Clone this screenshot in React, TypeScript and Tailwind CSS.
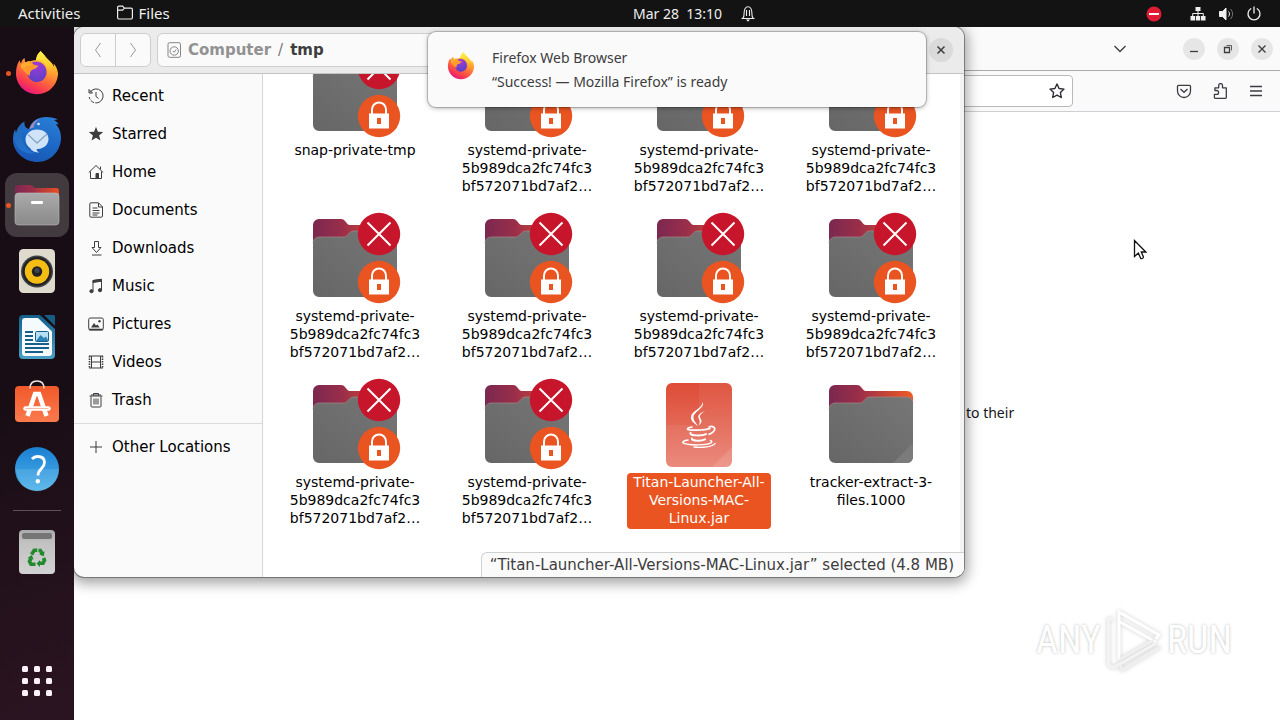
import type { ReactNode } from "react";

const UI = "font-['Noto_Sans',sans-serif]";

/* ---------- Dock artwork ---------- */

function FirefoxLogo({ id, className }: { id: string; className: string }) {
  return (
    <svg viewBox="0 0 48 48" className={className} aria-hidden="true">
      <defs>
        <linearGradient id={`${id}-body`} x1="0.8" y1="0.05" x2="0.3" y2="1">
          <stop offset="0" stopColor="#fff44f" />
          <stop offset="0.25" stopColor="#ffb52e" />
          <stop offset="0.55" stopColor="#ff7139" />
          <stop offset="0.8" stopColor="#fb3a50" />
          <stop offset="1" stopColor="#e31587" />
        </linearGradient>
        <linearGradient id={`${id}-flame`} x1="0.4" y1="0" x2="0.6" y2="1">
          <stop offset="0" stopColor="#fff24a" />
          <stop offset="0.5" stopColor="#ffcb2f" />
          <stop offset="1" stopColor="#ff8a2a" stopOpacity="0" />
        </linearGradient>
        <radialGradient id={`${id}-globe`} cx="0.5" cy="0.2" r="0.9">
          <stop offset="0" stopColor="#a436d8" />
          <stop offset="0.5" stopColor="#7640cf" />
          <stop offset="1" stopColor="#5a3cc0" />
        </radialGradient>
      </defs>
      <path
        d="M45 24c-.6-4-2-7-4.500-9.500.4 1.500.6 2.800.7 4-2.400-5.500-6.800-7.800-9.400-11.700C30.600 5 28.500 3.500 27.800 2c-3 2.300-4.400 5.500-4.800 9-2 .1-4 .6-5.500 1.300-1.800-.6-4 .3-4.600 1.300-1-.9-1.300-2.700-1.200-4.500-2.600 1.400-3.500 4.200-3.600 5.400-1-.7-1.200-2-1-3.500C4.300 14 3 19 3 24.500 3 36 12.500 45.200 24 45.200S45 36 45 24z"
        fill={`url(#${id}-body)`}
      />
      <path
        d="M27.800 2c-3 2.300-4.400 5.500-4.800 9 6.300.5 11.300 4.800 11.800 11 .5 6-2.500 9-4.800 11 8-1 12.500-8 11.200-14.500C38.800 13 34.400 10.700 31.800 6.800 30.600 5 28.500 3.500 27.800 2z"
        fill={`url(#${id}-flame)`}
      />
      <path d="M15.500 16.500c2-3 6-4.500 10-3.500 5 1 8.200 5.500 8 10.500-.2 5.500-4.500 9.500-9.700 9.500-5 0-9-3.800-9-8.800 0-3 0-5.500.7-7.700z" fill={`url(#${id}-globe)`} />
      <path
        d="M8 17c3.500-3.500 8-4.500 11-3.200 1.600 2.200 3.200 2.600 6.200 2.800-1 2.500-3 3.200-5.700 4.200-2.500 1-3 3.500-2.400 6-3.600-1.800-7.600-5-9.100-9.800z"
        fill="#ff9a2c"
      />
      <path d="M8 15c2-1.500 5-2.300 8-2 1.500 1.500 2 2 3.500 2.700-4 .3-8.500 1.300-11 4.300-.6-1.600-.8-3.400-.5-5z" fill="#ffb733" opacity="0.7" />
    </svg>
  );
}

function ThunderbirdLogo() {
  return (
    <svg viewBox="0 0 48 48" className="size-12" aria-hidden="true">
      <defs>
        <linearGradient id="tb-body" x1="0.7" y1="0" x2="0.3" y2="1">
          <stop offset="0" stopColor="#2a7cd4" />
          <stop offset="0.5" stopColor="#1c68c6" />
          <stop offset="1" stopColor="#1a57b4" />
        </linearGradient>
        <linearGradient id="tb-wing" x1="0" y1="0" x2="0" y2="1">
          <stop offset="0" stopColor="#2368b4" />
          <stop offset="1" stopColor="#2273cf" />
        </linearGradient>
      </defs>
      <path
        d="M16 14C18 6 25 2 33 2c5 0 9 1 12 2.500-1.500 0-3 .3-4 .8 2.500 1 4 2.700 4.800 4.400-1-.4-2-.5-2.800-.3 3.300 3.500 5 8 5 13.100C48 36 37.500 47 24.500 47 12 47 1 38 0 26c-.3-4 .4-8 2-11.500.3 1.700.5 3 1 4C4 13 7 9 11.500 6.500c-.500 4 .600 6.500 4.500 7.500z"
        fill="url(#tb-body)"
      />
      <path d="M11.500 6.500C8 12 7.500 18 9.500 25c2 7 6 11 13 13-9 2-18-3-20.500-11.500C.500 21 1.500 18 2 14.500c.3 1.700.5 3 1 4C4 13 7 9 11.500 6.500z" fill="url(#tb-wing)" />
      <path d="M16.500 14c1.500-5 5.500-9 10.500-10.500-4 2.500-6 5.500-6.500 9z" fill="#a58bb8" />
      <circle cx="25.500" cy="9" r="1.300" fill="#d8ecff" />
      <path d="M12.500 24.500c0-5.500 4.500-10 11.500-10s11.500 4 11.500 9.500S31 33.500 25 34c-1 0-1.500.5-1.300 1.200.3 1 1.300 1.800 2.800 2.300-4.500 0-8-1.500-9.500-4.500-2.500-2-4.500-4.500-4.500-8.500z" fill="#cfe4f8" />
      <path d="m15 19.500 9 8.500 10-9" fill="none" stroke="#8ba6c2" strokeWidth="1.300" />
    </svg>
  );
}

function FilesLogo() {
  return (
    <svg viewBox="0 0 48 48" className="size-12" aria-hidden="true">
      <defs>
        <linearGradient id="fl-back" x1="0" y1="0" x2="1" y2="0">
          <stop offset="0" stopColor="#7b2850" />
          <stop offset="0.4" stopColor="#9c2f4a" />
          <stop offset="1" stopColor="#ea5020" />
        </linearGradient>
        <linearGradient id="fl-front" x1="0" y1="0" x2="0" y2="1">
          <stop offset="0" stopColor="#aaa" />
          <stop offset="1" stopColor="#8a8a8a" />
        </linearGradient>
      </defs>
      <path d="M2 16V7a3 3 0 0 1 3-3h13l4 3h21a3 3 0 0 1 3 3v9H2z" fill="url(#fl-back)" />
      <rect x="2" y="12" width="44" height="32" rx="3.500" fill="url(#fl-front)" stroke="#bdbdbd" strokeWidth="0.600" />
      <rect x="18" y="20" width="12" height="3" rx="1" fill="#fff" />
    </svg>
  );
}

function RhythmboxLogo() {
  return (
    <svg viewBox="0 0 48 48" className="size-12" aria-hidden="true">
      <rect x="6" y="2" width="36" height="44" rx="4.500" fill="#dedace" />
      <circle cx="24" cy="24.500" r="16" fill="#3f4246" />
      <circle cx="24" cy="24.500" r="14.500" fill="#222" />
      <circle cx="24" cy="24.500" r="12.200" fill="#f4bd16" />
      <circle cx="24" cy="24.500" r="5.200" fill="#222" />
      <circle cx="24" cy="23.500" r="2.500" fill="#3d4652" />
    </svg>
  );
}

function WriterLogo() {
  return (
    <svg viewBox="0 0 48 48" className="size-12" aria-hidden="true">
      <defs>
        <linearGradient id="wr-bg" x1="0" y1="0" x2="0" y2="1">
          <stop offset="0" stopColor="#14608c" />
          <stop offset="1" stopColor="#4a9fc6" />
        </linearGradient>
      </defs>
      <path d="M10 2h17l15 14v26a4 4 0 0 1-4 4H10a4 4 0 0 1-4-4V6a4 4 0 0 1 4-4z" fill="url(#wr-bg)" />
      <path d="M31 2h9.500A1.500 1.500 0 0 1 42 3.500V13z" fill="#155d85" />
      <path d="M12 5h13l14 13.500V40a3 3 0 0 1-3 3H12a3 3 0 0 1-3-3V8a3 3 0 0 1 3-3z" fill="#f5fafd" />
      <path d="M12 19h8M12 23h8M12 27h8M12 31h24M12 35h24M12 39h18" stroke="#16618c" strokeWidth="2" />
      <rect x="22.500" y="18.500" width="13" height="10" rx="1" fill="#b7e0f5" stroke="#16618c" />
      <path d="m23 28 4.500-6 3.500 3 2-1.500 2.500 4.500z" fill="#2b82b5" />
    </svg>
  );
}

function SoftwareLogo() {
  return (
    <svg viewBox="0 0 48 48" className="size-12" aria-hidden="true">
      <defs>
        <linearGradient id="sw-bg" x1="0" y1="0" x2="0" y2="1">
          <stop offset="0" stopColor="#f0592b" />
          <stop offset="1" stopColor="#fb7a4d" />
        </linearGradient>
      </defs>
      <rect x="2" y="7" width="44" height="36" rx="4" fill="url(#sw-bg)" />
      <path d="M17 9.500c0-5 3-7.500 7-7.500s7 2.500 7 7.500" fill="none" stroke="#f3e6dc" strokeWidth="1.500" />
      <path d="m14.500 37 7.500-22h4l7.500 22" fill="none" stroke="#fff" strokeWidth="4.500" />
      <path d="M12.500 29.500h23" stroke="#fff" strokeWidth="4.500" strokeLinecap="round" />
      <path d="M12.500 29.500h23" stroke="#f5a98c" strokeWidth="0.800" />
    </svg>
  );
}

function HelpLogo() {
  return (
    <svg viewBox="0 0 48 48" className="size-12" aria-hidden="true">
      <defs>
        <linearGradient id="hp-bg" x1="0" y1="0" x2="0" y2="1">
          <stop offset="0" stopColor="#1b7fd2" />
          <stop offset="1" stopColor="#4db2ea" />
        </linearGradient>
      </defs>
      <circle cx="24" cy="24" r="22" fill="url(#hp-bg)" />
      <path d="M2 24h44A22 22 0 0 1 9 40.500z" fill="#fff" opacity="0.100" />
      <path d="M19 14c1.500-1.700 3.500-2.500 5.500-2.500 4.500 0 7 2.300 7 6 0 6-6.500 6-6.500 13" fill="none" stroke="#fff" strokeWidth="2.800" />
      <circle cx="24.800" cy="36.200" r="2.200" fill="#fff" />
    </svg>
  );
}

function TrashLogo() {
  return (
    <svg viewBox="0 0 48 48" className="size-12" aria-hidden="true">
      <defs>
        <linearGradient id="tr-bg" x1="0" y1="0" x2="0" y2="1">
          <stop offset="0" stopColor="#aaa" />
          <stop offset="0.300" stopColor="#c2c2c2" />
          <stop offset="1" stopColor="#d2d2d2" />
        </linearGradient>
      </defs>
      <rect x="6" y="2" width="36" height="44" rx="4" fill="url(#tr-bg)" />
      <rect x="9" y="5" width="30" height="6" rx="2" fill="#757575" />
      <g fill="none" stroke="#228a2c" strokeWidth="3.600">
        <path d="m18.500 26.500 2.800-4.300h3" />
        <path d="m25.500 22.500h1.800l2.200 3.500" />
        <path d="m30.500 30 1 2.200-1.500 3h-3.500" />
        <path d="M22.500 36.200H18l-1.500-2.700 1.300-3" />
      </g>
      <path d="m31.500 23.300-.6 5-4.800-1.800zM27 32v7l-3.500-3.500zM14.500 30l4.200-3 2 4.600z" fill="#228a2c" />
    </svg>
  );
}

const dockApps = [
  { name: "Firefox Web Browser", icon: <FirefoxLogo id="dock-fx" className="size-12" />, running: true, active: false },
  { name: "Thunderbird Mail", icon: <ThunderbirdLogo />, running: false, active: false },
  { name: "Files", icon: <FilesLogo />, running: true, active: true },
  { name: "Rhythmbox", icon: <RhythmboxLogo />, running: false, active: false },
  { name: "LibreOffice Writer", icon: <WriterLogo />, running: false, active: false },
  { name: "Ubuntu Software", icon: <SoftwareLogo />, running: false, active: false },
  { name: "Help", icon: <HelpLogo />, running: false, active: false },
];

function Dock() {
  return (
    <nav aria-label="Dock" className="flex w-[74px] shrink-0 flex-col items-center gap-0.5 bg-linear-160 from-[#180d14] from-50% to-[#2b1421] pt-3.5 pb-[7px]">
      {dockApps.map((app) => (
        <button
          key={app.name}
          aria-label={app.name}
          className={`relative flex size-16 items-center justify-center rounded-xl ${app.active ? "bg-[#433a40]" : ""}`}
        >
          {app.running && <span className="absolute left-px size-[5px] rounded-full bg-[#e95420]" />}
          {app.icon}
        </button>
      ))}
      <hr className="my-[7px] w-12 border-[#5b5157]" />
      <button aria-label="Trash" className="flex size-16 items-center justify-center">
        <TrashLogo />
      </button>
      <button aria-label="Show Applications" className="mt-auto flex size-16 items-center justify-center">
        <svg viewBox="0 0 30 30" className="size-[30px]" fill="#fdf2f8" aria-hidden="true">
          {[0, 12, 24].map((y) => [0, 12, 24].map((x) => <rect key={`${x}-${y}`} x={x} y={y} width="6" height="6" rx="1.500" />))}
        </svg>
      </button>
    </nav>
  );
}

/* ---------- Top bar ---------- */

function TopBar() {
  return (
    <header className={`grid h-[27px] shrink-0 grid-cols-[633px_1fr_auto] items-center bg-[#131313] text-sm text-[#eee] ${UI}`}>
      <div className="flex items-center pl-[18px] text-[15px]">
        <button>Activities</button>
        <button className="ml-9 flex items-center gap-1.5">
          <svg viewBox="0 0 16 16" className="size-4" fill="none" stroke="#eee" strokeWidth="1.200" aria-hidden="true">
            <path d="M.6 12.500V2.600A1.500 1.500 0 0 1 2.100 1.100h3.500l1.800 2h6.500a1.500 1.500 0 0 1 1.500 1.500v7.900a1.500 1.500 0 0 1-1.500 1.500H2.100a1.500 1.500 0 0 1-1.500-1.500zM.8 5.100h4.800l1.800-2" />
          </svg>
          Files
        </button>
      </div>
      <button className="flex items-center gap-[18px] whitespace-pre">
        {"Mar 28  13:10"}
        <svg viewBox="0 0 16 16" className="size-4" fill="none" stroke="#eee" strokeWidth="1.100" aria-hidden="true">
          <path d="M1.500 12.500h13M2.800 12.300c1.500-1.500 1.300-3 1.300-5.200C4.100 3.300 5.600.8 8 .8s3.900 2.500 3.900 6.300c0 2.200-.2 3.700 1.300 5.200M6.500 10V4M9.500 10V4" />
          <path d="M6 13.500h4L8 15.800z" fill="#eee" stroke="none" />
        </svg>
      </button>
      <div className="flex items-center pr-[18px]">
        <svg viewBox="0 0 16 16" className="mr-7 size-4" aria-hidden="true">
          <circle cx="8" cy="8" r="7.500" fill="#e01b34" />
          <path d="M3 8h10" stroke="#fff" strokeWidth="2" />
        </svg>
        <button aria-label="System menu" className="flex items-center gap-3">
          <svg viewBox="0 0 16 16" className="size-4" fill="#eee" aria-hidden="true">
            <path d="M5.500 1h5v4h-5zM.500 10h4.500v4.500H.500zM5.800 10h4.400v4.500H5.800zM11 10h4.500v4.500H11z" />
            <path d="M8 5v5M2.700 10V7.500h10.600V10" fill="none" stroke="#eee" />
          </svg>
          <svg viewBox="0 0 16 16" className="size-4" fill="none" stroke="#eee" aria-hidden="true">
            <path d="M1.500 5.500h3L8 2v12l-3.500-3.500h-3z" fill="#eee" />
            <path d="M10.500 5.500c1.300 1.300 1.300 3.700 0 5" />
            <path d="M12.500 3c2.700 2.700 2.700 7.300 0 10" opacity="0.450" />
          </svg>
          <svg viewBox="0 0 16 16" className="size-4" fill="none" stroke="#eee" strokeWidth="1.300" strokeLinecap="round" aria-hidden="true">
            <path d="M8 1v6M4.800 2.800a6 6 0 1 0 6.400 0" />
          </svg>
        </button>
      </div>
    </header>
  );
}

/* ---------- Browser window ---------- */

function RoundButton({ label, children }: { label: string; children: ReactNode }) {
  return (
    <button aria-label={label} className="flex size-[22px] items-center justify-center rounded-full bg-[#e6e6e6]">
      <svg viewBox="0 0 10 10" className="size-2.5" fill="none" stroke="#3d3d3d" strokeWidth="1.300" aria-hidden="true">
        {children}
      </svg>
    </button>
  );
}

function BrowserWindow() {
  return (
    <section aria-label="Mozilla Firefox" className="flex h-full flex-col bg-white">
      <div className="flex h-11 items-center justify-end gap-3 border-b border-[#a9a9ad] bg-[#fafafa] pr-[7px]">
        <button aria-label="List all tabs" className="mr-[42px] p-0.5">
          <svg viewBox="0 0 14 14" className="size-3.5" fill="none" stroke="#3d3d3d" strokeWidth="1.300" aria-hidden="true">
            <path d="m1.500 4 5.500 5.500L12.500 4" />
          </svg>
        </button>
        <RoundButton label="Minimize">
          <path d="M1 7.500h8" />
        </RoundButton>
        <RoundButton label="Restore">
          <path d="M1.500 3.500h5v5h-5z" />
          <path d="M3.500 1.500h5v5" strokeWidth="0.800" />
        </RoundButton>
        <RoundButton label="Close">
          <path d="m1.500 1.500 7 7M8.500 1.500l-7 7" />
        </RoundButton>
      </div>
      <div className="flex h-[41px] items-center border-b border-[#cfcfd3] bg-[#fafafa] pr-4 pl-[100px]">
        <div className="flex h-8 flex-1 items-center justify-end rounded-[4px] border border-[#b9b9bd] bg-white pr-[7px]">
          <button aria-label="Bookmark this page">
            <svg viewBox="0 0 16 16" className="size-4" fill="none" stroke="#2b2a33" strokeWidth="1.400" strokeLinejoin="round" aria-hidden="true">
              <path d="m8 1 2.100 4.500 4.900.6-3.600 3.400.9 5L8 12.100l-4.300 2.400.9-5L1 6.100l4.900-.6z" />
            </svg>
          </button>
        </div>
        <div className="ml-[103px] flex items-center gap-5">
          <button aria-label="Save to Pocket">
            <svg viewBox="0 0 16 16" className="size-4" fill="none" stroke="#3d3c45" strokeWidth="1.300" aria-hidden="true">
              <path d="M2.500 2.300h11a1 1 0 0 1 1 1V8a6.500 6.500 0 0 1-13 0V3.300a1 1 0 0 1 1-1z" />
              <path d="M4.500 6 8 9.300 11.500 6" />
            </svg>
          </button>
          <button aria-label="Extensions">
            <svg viewBox="0 0 16 16" className="size-4" fill="none" stroke="#3d3c45" strokeWidth="1.300" strokeLinejoin="round" aria-hidden="true">
              <path d="M3.200 15.300h10.300a.8.800 0 0 0 .8-.8V4.800h-3.800V2.500a1.900 1.900 0 0 0-3.800 0v2.300H2.900v2.700h1.800a1.900 1.900 0 0 1 0 3.800H2.400v3.200a.8.800 0 0 0 .8.800z" />
            </svg>
          </button>
          <button aria-label="Open application menu">
            <svg viewBox="0 0 16 16" className="size-4" stroke="#3d3c45" strokeWidth="1.300" aria-hidden="true">
              <path d="M2 3.500h12M2 8h12M2 12.500h12" />
            </svg>
          </button>
        </div>
      </div>
      <main className="flex-1 pt-[291px] pl-[892px]">
        <p className={`text-sm leading-5 text-[#15141a] ${UI}`}>to their</p>
      </main>
    </section>
  );
}

/* ---------- File manager window ---------- */

const places: { name: string; icon: ReactNode }[] = [
  {
    name: "Recent",
    icon: (
      <>
        <path d="M2 4.500a7 7 0 1 1-.8 4.500" strokeDasharray="30 1.200 4 1.200 4 2" />
        <path d="M1 1.500v3.500h3.500zM8 4v4.500l2.500 2" />
      </>
    ),
  },
  { name: "Starred", icon: <path d="m8 .8 1.900 5 5.300.3-4.100 3.400 1.400 5.100L8 11.800l-4.500 2.800 1.400-5.100L.8 6.100l5.300-.3z" fill="#3d3d3d" stroke="none" /> },
  {
    name: "Home",
    icon: (
      <>
        <path d="m.8 8.500 7.200-7 7.200 7M2.500 7.500v7h11v-7M12.500 5.500v-3" />
        <path d="M8 9.500h2.500v5H8z" fill="#3d3d3d" />
      </>
    ),
  },
  {
    name: "Documents",
    icon: (
      <>
        <path d="M3 .8h7.500l4 4v9.200a1.200 1.200 0 0 1-1.200 1.200H3A1.200 1.200 0 0 1 1.800 14V2A1.200 1.200 0 0 1 3 .8z" />
        <path d="M4.500 6h5M4.500 8.500h7M4.500 11h7M4.500 13h5M10.500 1v4h4" />
      </>
    ),
  },
  { name: "Downloads", icon: <path d="M6.500 1.500h4v6H13l-4.500 5-4.500-5h2.500zM4 15h9.500" /> },
  {
    name: "Music",
    icon: (
      <>
        <path d="M5 13V2.500l8.500-1V12" />
        <path d="M5 2.500 13.500 1.200v2L5 4.500z" fill="#3d3d3d" />
        <circle cx="3.500" cy="13.200" r="1.600" fill="#3d3d3d" />
        <circle cx="12" cy="12.200" r="1.600" fill="#3d3d3d" />
      </>
    ),
  },
  {
    name: "Pictures",
    icon: (
      <>
        <rect x="0.700" y="2" width="14.600" height="12" rx="1.500" />
        <path d="M1 13.500h14" strokeWidth="1.600" />
        <path d="m3 11.500 3-4.500 2 2.500 1.500-1 2.200 3z" fill="#3d3d3d" stroke="none" />
        <circle cx="11.500" cy="5.200" r="1.200" fill="#3d3d3d" stroke="none" />
      </>
    ),
  },
  {
    name: "Videos",
    icon: (
      <>
        <path d="M3.500 2v12M12.500 2v12M3.500 8h9M1 2h14M1 14h14" />
        <path d="M1.500 2v12M14.500 2v12" strokeWidth="1.600" strokeDasharray="1.500 1" />
      </>
    ),
  },
  { name: "Trash", icon: <path d="M1.500 4h13M5.500 3.500v-2h5v2M3 4.500v9.500a1 1 0 0 0 1 1h8a1 1 0 0 0 1-1V4.500M6 6.500v6M8 6.500v6M10 6.500v6M3 3h10" /> },
];

function PlaceRow({ name, icon }: { name: string; icon: ReactNode }) {
  return (
    <a href="#" className="flex h-[38px] items-center gap-2 pl-3.5">
      <svg viewBox="0 0 16 16" className="size-4" fill="none" stroke="#3d3d3d" aria-hidden="true">
        {icon}
      </svg>
      {name}
    </a>
  );
}

function FolderIcon({ locked }: { locked: boolean }) {
  return (
    <svg viewBox="0 0 96 96" className="size-24 overflow-visible" aria-hidden="true">
      <path d="M5 30V14a6 6 0 0 1 6-6h22c2 0 3 .7 4 2l2.500 3c.8.8 1.500 1 3 1H83a6 6 0 0 1 6 6v12H5z" fill="url(#folder-back)" />
      <path d="M5 32a6 6 0 0 1 6-6h24c2 0 3-.5 4-1.500l3-3c1-1 2-1.500 4-1.500h37a6 6 0 0 1 6 6v54a6 6 0 0 1-6 6H11a6 6 0 0 1-6-6z" fill="url(#folder-front)" />
      <path d="M5 32a6 6 0 0 1 6-6h24c2 0 3-.5 4-1.500l3-3c1-1 2-1.500 4-1.500h37a6 6 0 0 1 6 6" fill="none" stroke="#a08a86" strokeWidth="0.700" />
      {!locked && <path d="M89 66v14a6 6 0 0 1-6 6H69z" fill="#7b7b7b" />}
      {locked && (
        <>
          <circle cx="71" cy="23" r="21.200" fill="#c7162b" />
          <path d="m59.500 11.500 23 23M82.500 11.500l-23 23" stroke="#fff" strokeWidth="2" />
          <circle cx="71" cy="71" r="21.200" fill="#e95420" />
          <path d="M61 68.500h20v15H61z" fill="#fff" />
          <path d="M64 69v-4.500a7 7 0 0 1 14 0V69" fill="none" stroke="#fff" strokeWidth="2" />
          <path d="M69 73h4v6h-4z" fill="#e95420" />
        </>
      )}
    </svg>
  );
}

function JarIcon() {
  return (
    <svg viewBox="0 0 96 96" className="size-24" aria-hidden="true">
      <defs>
        <linearGradient id="jar-bg" x1="0" y1="0" x2="0" y2="1">
          <stop offset="0" stopColor="#de4c36" />
          <stop offset="1" stopColor="#e98375" />
        </linearGradient>
      </defs>
      <rect x="14" y="6" width="66" height="84" rx="6" fill="url(#jar-bg)" />
      <path d="M47 6h27a6 6 0 0 1 6 6v36H47z" fill="#fff" opacity="0.060" />
      <path d="M14 48h66v36a6 6 0 0 1-6 6H20a6 6 0 0 1-6-6z" fill="#fff" opacity="0.060" />
      <path d="M80 70v14a6 6 0 0 1-6 6H60z" fill="#fff" opacity="0.120" />
      <g fill="#fff">
        <path d="M50.500 25c3 6-9 9.500-9 15.500 0 3.500 3 5.500 4.500 8.500-4.500-3-7.500-5.500-7-9.500.6-5.500 12-8.500 11.500-14.500z" />
        <path d="M53 34c-5 2-7.500 4-6.500 7 .6 2 2.500 3.500 0 7.500 5-3.500 2.500-6 1.500-8-.8-2 1-4 5-6.500z" />
      </g>
      <g fill="none" stroke="#fff" strokeLinecap="round">
        <path d="M40 50c-3 .7-5 1.500-4.500 2.200 1 1.400 17 1.300 22.500-.7" strokeWidth="1.600" />
        <path d="M57 50c3.500-1.500 6.500.2 5.500 3-.8 2-3 3.500-5.500 4.300" strokeWidth="1.700" />
        <path d="M38.500 56c-1.500 3 12 3 15.500 1" strokeWidth="2" />
        <path d="M40 61.500c-1 2.700 9.500 2.700 13 .8" strokeWidth="2" />
        <path d="M36 63c-4 .4-6.500 2.200-4.500 3.200 5 2.500 25 2.200 28-.7.6-.8 0-1.500-1-2" strokeWidth="1.500" />
        <path d="M42 70c8 .8 19-.2 21-3.500" strokeWidth="1.300" />
      </g>
    </svg>
  );
}

type Item = { id: number; lines: string[]; kind: "locked" | "folder" | "jar" };

const hashed = ["systemd-private-", "5b989dca2fc74fc3", "bf572071bd7af2…"];

const items: Item[] = [
  { id: 1, lines: ["snap-private-tmp"], kind: "locked" },
  ...[2, 3, 4, 5, 6, 7, 8, 9, 10].map((id): Item => ({ id, lines: hashed, kind: "locked" })),
  { id: 11, lines: ["Titan-Launcher-All-", "Versions-MAC-", "Linux.jar"], kind: "jar" },
  { id: 12, lines: ["tracker-extract-3-", "files.1000"], kind: "folder" },
];

function FileCell({ item }: { item: Item }) {
  const selected = item.kind === "jar";
  return (
    <li className="flex h-[166px] flex-col items-center">
      {item.kind === "jar" ? <JarIcon /> : <FolderIcon locked={item.kind === "locked"} />}
      <span className={`mr-0.5 w-36 rounded-[4px] text-center text-sm leading-[18px] ${selected ? "bg-[#e95420] pb-0.5 text-white" : ""}`}>
        {item.lines.map((line) => (
          <span key={line} className="block">
            {line}
          </span>
        ))}
      </span>
    </li>
  );
}

function FilesWindow() {
  return (
    <section
      aria-label="Files"
      className="absolute top-0 left-0 flex h-[550px] w-[890px] flex-col overflow-hidden rounded-[10px] bg-[#fafafa] font-['DejaVu_Sans',sans-serif] text-[15px] text-black shadow-[0_3px_14px_3px_rgba(0,0,0,0.38),0_0_0_1px_rgba(0,0,0,0.35)]"
    >
      <svg className="absolute size-0" aria-hidden="true">
        <defs>
          <linearGradient id="folder-back" x1="0" y1="0" x2="1" y2="0">
            <stop offset="0" stopColor="#7b2850" />
            <stop offset="0.350" stopColor="#9a2e4a" />
            <stop offset="1" stopColor="#f05a24" />
          </linearGradient>
          <linearGradient id="folder-front" x1="0" y1="1" x2="1" y2="0">
            <stop offset="0" stopColor="#666" />
            <stop offset="1" stopColor="#767676" />
          </linearGradient>
        </defs>
      </svg>
      <header className="flex h-[47px] shrink-0 items-center gap-1.5 border-b border-[#c4c4c4] bg-[#ebebeb] px-1.5">
        <div className="flex h-[34px] w-[71px] divide-x divide-[#cdcdcd] rounded-md border border-[#cdcdcd] bg-[#fafafa]">
          <button aria-label="Back" className="flex flex-1 items-center justify-center">
            <svg viewBox="0 0 16 16" className="size-4" fill="none" stroke="#999" aria-hidden="true">
              <path d="M10.500 1 5.500 8l5 7" />
            </svg>
          </button>
          <button aria-label="Forward" className="flex flex-1 items-center justify-center">
            <svg viewBox="0 0 16 16" className="size-4" fill="none" stroke="#999" aria-hidden="true">
              <path d="m5.500 1 5 7-5 7" />
            </svg>
          </button>
        </div>
        <div className="flex h-[34px] flex-1 items-center rounded-md border border-[#cdcdcd] bg-[#fafafa] pl-2 text-[15px] font-bold">
          <a href="#" className="flex items-center gap-1.5 text-[#929292]">
            <svg viewBox="0 0 16 16" className="size-4" fill="none" stroke="#858585" aria-hidden="true">
              <rect x="2" y="0.700" width="12.500" height="14.600" rx="1.500" />
              <circle cx="8.200" cy="9" r="4.200" />
              <path d="m6.800 9 1.200 1.300 2.200-2.800" />
            </svg>
            Computer
          </a>
          <span className="px-[7px] font-normal text-[#777]">/</span>
          <a href="#" className="text-[#3d3d3d]">tmp</a>
        </div>
        <button aria-label="Close window" className="mx-[5px] flex size-6 items-center justify-center rounded-full bg-[#dadada]">
          <svg viewBox="0 0 10 10" className="size-2.5" stroke="#3d3d3d" strokeWidth="1.500" aria-hidden="true">
            <path d="m1.500 1.500 7 7M8.500 1.500l-7 7" />
          </svg>
        </button>
      </header>
      <div className="flex min-h-0 flex-1">
        <nav aria-label="Places" className="w-[189px] shrink-0 border-r border-[#d6d6d6] pt-[3px]">
          {places.map((place) => (
            <PlaceRow key={place.name} name={place.name} icon={place.icon} />
          ))}
          <hr className="my-1 border-[#dcdcdc]" />
          <PlaceRow name="Other Locations" icon={<path d="M8 2v12M2 8h12" />} />
        </nav>
        <main className="relative flex min-w-0 flex-1 flex-col justify-end overflow-hidden border-r-4 border-[#f3f3f3] bg-white pb-[34px] pl-[7px]">
          <ul className="grid w-[688px] grid-cols-4">
            {items.map((item) => (
              <FileCell key={item.id} item={item} />
            ))}
          </ul>
        </main>
      </div>
      <output className="absolute right-0 bottom-0 rounded-tl-md border-t border-l border-[#d0d0d0] bg-[#fafafa] py-0.5 pr-2.5 pl-2 leading-5 whitespace-nowrap text-[#3d3d3d]">
        “Titan-Launcher-All-Versions-MAC-Linux.jar” selected (4.8 MB)
      </output>
    </section>
  );
}

/* ---------- Overlays ---------- */

function Notification() {
  return (
    <aside
      role="status"
      className={`absolute top-[5px] left-1/2 flex h-[75px] w-[498px] -translate-x-1/2 items-center gap-4 rounded-lg bg-[#fafafa] pl-[18px] text-sm leading-6 text-[#3d3d3d] shadow-[0_1px_5px_rgba(0,0,0,0.35),0_0_0_1px_rgba(0,0,0,0.18)] ${UI}`}
    >
      <FirefoxLogo id="note-fx" className="mb-2 size-[30px]" />
      <div>
        <p>Firefox Web Browser</p>
        <p>“Success! — Mozilla Firefox” is ready</p>
      </div>
    </aside>
  );
}

function Watermark() {
  return (
    <div className="pointer-events-none absolute right-12 bottom-12 flex items-center gap-1 font-['Liberation_Sans_Narrow','Roboto_Condensed','DejaVu_Sans_Condensed',sans-serif] text-[38px] leading-[64px] text-white text-shadow-[0_0_3px_rgba(0,0,0,0.28)]">
      <span>ANY</span>
      <svg viewBox="0 0 58 64" className="h-16 w-[58px] overflow-visible drop-shadow-[0_0_2px_rgba(0,0,0,0.2)]" fill="none" strokeWidth="3" aria-hidden="true">
        <path d="M8 11H3.500v46l5 2.500 42-24" stroke="#f3f3f3" />
        <path d="M14 52V4l40 23-3.500 4" stroke="#fff" />
        <path d="m15 14 36 20" stroke="#fff" />
        <path d="M14 52 49 32M15 57l2 5 38-23" stroke="#efefef" />
      </svg>
      <span>RUN</span>
    </div>
  );
}

function Pointer() {
  return (
    <svg viewBox="0 0 14 22" className="pointer-events-none absolute top-[212px] left-[1059px] h-[22px] w-3.5" aria-hidden="true">
      <path d="M1.500 1.500v16l3.800-3.500 2.500 5.500c1.500.3 2.500-.4 2.700-1.500L8.300 13h4.500z" fill="#fff" stroke="#111" strokeWidth="1.300" />
    </svg>
  );
}

export default function App() {
  return (
    <div className="flex h-screen flex-col overflow-hidden bg-[#131313]">
      <TopBar />
      <div className="flex min-h-0 flex-1">
        <Dock />
        <div className="relative min-w-0 flex-1 overflow-hidden">
          <BrowserWindow />
          <FilesWindow />
          <Notification />
          <Watermark />
          <Pointer />
        </div>
      </div>
    </div>
  );
}
